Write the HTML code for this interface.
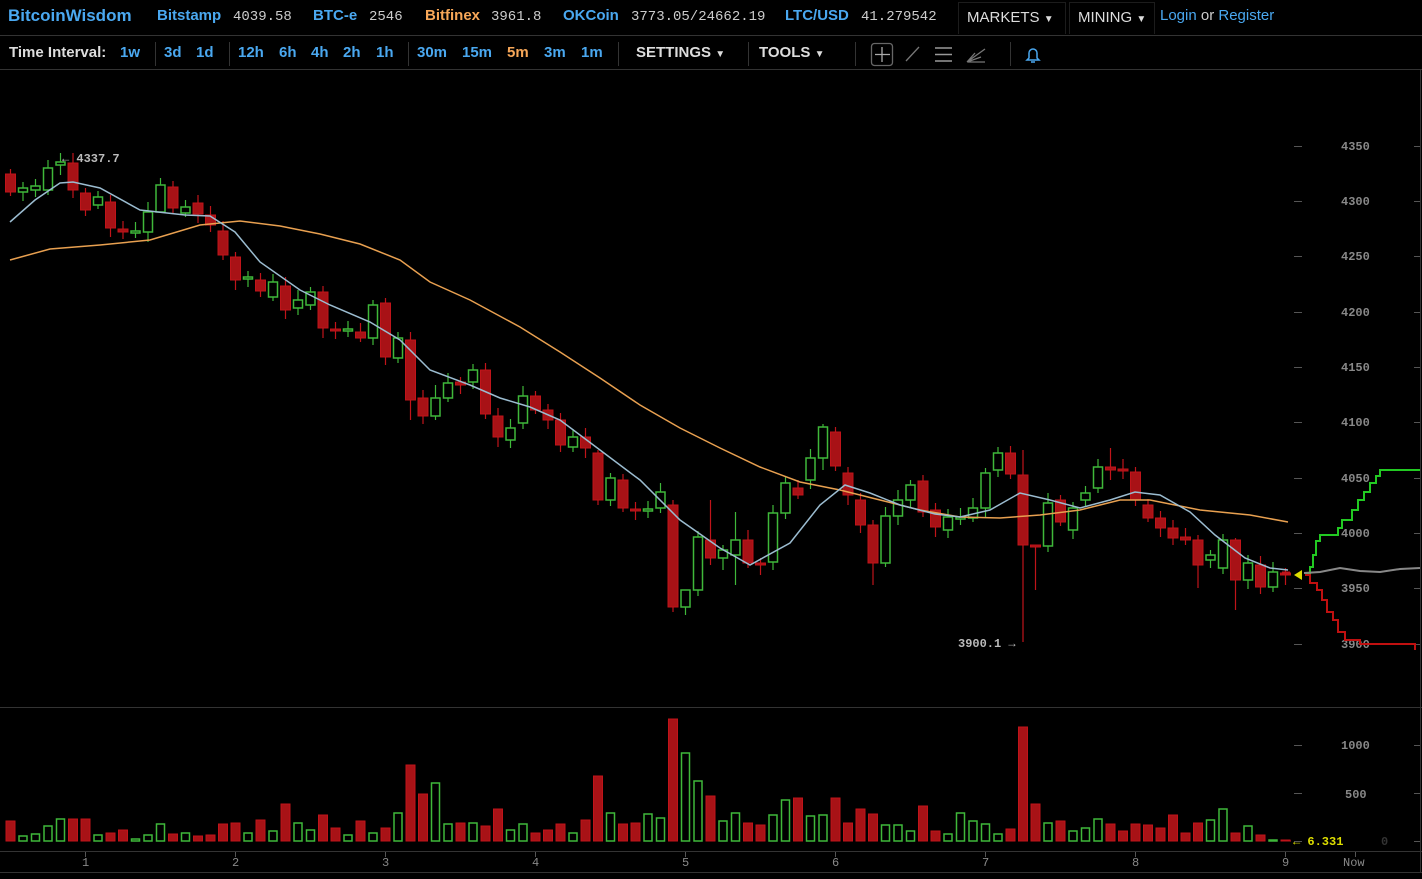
<!DOCTYPE html>
<html><head><meta charset="utf-8">
<style>
*{margin:0;padding:0;box-sizing:border-box}
body{width:1422px;height:879px;background:#000;overflow:hidden;font-family:"Liberation Sans",sans-serif;color:#ccc;position:relative}
.top{position:absolute;left:0;top:0;width:1422px;height:36px;border-bottom:1px solid #333;font-size:15px;white-space:nowrap}
.top span{position:absolute;top:7px}
.b{color:#4aa8f0;font-weight:bold}
.o{color:#f7a758;font-weight:bold}
.m{font-family:"Liberation Mono",monospace;font-size:14px;color:#ccc;top:9px!important}
.menu{position:absolute;top:2px;height:32px;border:1px solid #1c1c1c;border-bottom:none;color:#ddd;padding:6px 8px 0 8px}
.bar2{position:absolute;left:0;top:36px;width:1422px;height:34px;border-bottom:1px solid #333;font-size:15px;font-weight:bold;white-space:nowrap}
.bar2 span{position:absolute;top:8px}
.sep{position:absolute;top:6px;width:1px;height:24px;background:#333}
svg{position:absolute;left:0;top:0}
</style></head><body>
<div class="top">
<span class="b" style="left:8px;font-size:17px;top:6px">BitcoinWisdom</span>
<span class="b" style="left:157px">Bitstamp</span><span class="m" style="left:233px">4039.58</span>
<span class="b" style="left:313px">BTC-e</span><span class="m" style="left:369px">2546</span>
<span class="o" style="left:425px">Bitfinex</span><span class="m" style="left:491px">3961.8</span>
<span class="b" style="left:563px">OKCoin</span><span class="m" style="left:631px">3773.05/24662.19</span>
<span class="b" style="left:785px">LTC/USD</span><span class="m" style="left:861px">41.279542</span>
<div class="menu" style="left:958px;width:108px">MARKETS <span style="position:static;font-size:10px">▼</span></div>
<div class="menu" style="left:1069px;width:86px">MINING <span style="position:static;font-size:10px">▼</span></div>
<span style="left:1160px;color:#4aa8f0">Login <span style="position:static;color:#ccc">or</span> Register</span>
</div>
<div class="bar2">
<span style="left:9px;color:#ddd">Time Interval:</span>
<span class="b" style="left:120px">1w</span><div class="sep" style="left:155px"></div>
<span class="b" style="left:164px">3d</span><span class="b" style="left:196px">1d</span><div class="sep" style="left:229px"></div>
<span class="b" style="left:238px">12h</span><span class="b" style="left:279px">6h</span><span class="b" style="left:311px">4h</span><span class="b" style="left:343px">2h</span><span class="b" style="left:376px">1h</span><div class="sep" style="left:408px"></div>
<span class="b" style="left:417px">30m</span><span class="b" style="left:462px">15m</span><span class="o" style="left:507px">5m</span><span class="b" style="left:544px">3m</span><span class="b" style="left:581px">1m</span><div class="sep" style="left:618px"></div>
<span style="left:636px;color:#ddd">SETTINGS <span style="position:static;font-size:10px">▼</span></span><div class="sep" style="left:748px"></div>
<span style="left:759px;color:#ddd">TOOLS <span style="position:static;font-size:10px">▼</span></span><div class="sep" style="left:855px"></div>
<div class="sep" style="left:1010px"></div>
</div>
<svg width="1422" height="879" id="s">
<g stroke="#888" fill="none" stroke-width="1.3">
<rect x="871.5" y="43.5" width="21" height="22" rx="3" stroke="#666"/>
<path d="M882 47v15M875 54.5h15" stroke="#aaa"/>
<path d="M906 61l13-14" stroke="#777"/>
<path d="M935 48h17M935 54.5h17M935 61h17" stroke="#999" stroke-width="1.6"/>
<path d="M967 62l18-13M967 62l14-5M967 62l8-9M968 62h17" stroke="#777"/>
<path d="M1029 58v-5a4 4 0 0 1 8 0v5l2 2h-12zM1031 62h4" stroke="#4aa8f0" stroke-width="1.5"/>
</g>
<line x1="0" y1="707.5" x2="1422" y2="707.5" stroke="#333"/>
<line x1="0" y1="851.5" x2="1422" y2="851.5" stroke="#333"/>
<line x1="0" y1="872.5" x2="1422" y2="872.5" stroke="#333"/>
<line x1="1420.5" y1="70" x2="1420.5" y2="872" stroke="#333"/>
<g font-family="Liberation Mono,monospace" font-size="12" fill="#888" font-weight="bold">
<text x="1341" y="150">4350</text><text x="1341" y="205">4300</text><text x="1341" y="260">4250</text><text x="1341" y="316">4200</text><text x="1341" y="371">4150</text><text x="1341" y="426">4100</text><text x="1341" y="482">4050</text><text x="1341" y="537">4000</text><text x="1341" y="592">3950</text><text x="1341" y="648">3900</text>
<text x="1341" y="749">1000</text><text x="1345" y="798">500</text><text x="1381" y="845" fill="#333">0</text>
<text x="82" y="866" font-weight="normal">1</text><text x="232" y="866" font-weight="normal">2</text><text x="382" y="866" font-weight="normal">3</text><text x="532" y="866" font-weight="normal">4</text><text x="682" y="866" font-weight="normal">5</text><text x="832" y="866" font-weight="normal">6</text><text x="982" y="866" font-weight="normal">7</text><text x="1132" y="866" font-weight="normal">8</text><text x="1282" y="866" font-weight="normal">9</text><text x="1343" y="866" font-weight="normal">Now</text>
<text x="62" y="162" fill="#bbb">← 4337.7</text>
<text x="958" y="647" fill="#bbb">3900.1 →</text>
<text x="1293" y="845" fill="#dd0">← 6.331</text>
</g>
<g id="g"></g>
</svg>
<script>
var ns="http://www.w3.org/2000/svg",g=document.getElementById('g'),h='';
// ticks
[146,201,256,312,367,422,478,533,588,644,745,793,841].forEach(function(y){h+='<path d="M1294 '+y+'.5h8M1414 '+y+'.5h6" stroke="#555"/>';});
for(var d=0;d<9;d++){var x=85.5+150*d;h+='<path d="M'+x+' 852v5" stroke="#555"/>';}
h+='<path d="M1355.5 852v5" stroke="#555"/>';
var C=[[174,192],[192,188],[190,186],[190,168],[165,162],[163,190],[193,210],[205,197],[202,228],[229,232],[233,231],[232,212],[212,185],[187,208],[213,207],[203,214],[215,225],[231,255],[257,280],[279,277],[280,291],[297,282],[286,310],[308,300],[305,292],[292,328],[329,331],[331,329],[332,338],[338,305],[303,357],[358,338],[340,400],[398,416],[416,398],[398,383],[382,385],[382,370],[370,414],[416,437],[440,428],[423,396],[396,410],[410,420],[420,445],[447,437],[437,448],[453,500],[500,478],[480,508],[509,511],[511,509],[508,492],[505,607],[607,590],[590,537],[540,558],[558,550],[555,540],[540,563],[563,565],[562,513],[513,483],[488,495],[480,458],[458,427],[432,466],[473,495],[500,525],[525,563],[563,516],[516,500],[500,485],[481,512],[510,527],[530,517],[519,517],[518,508],[508,473],[470,453],[453,474],[475,545],[545,547],[546,503],[500,522],[530,508],[500,493],[488,467],[467,470],[469,471],[472,500],[505,518],[518,528],[528,538],[537,540],[540,565],[560,555],[568,540],[540,580],[580,563],[565,587],[587,572],[573,575]];
var W={53:[500,612],54:[590,615],81:[450,642],82:[545,590],12:[178,212],30:[298,365],29:[300,345],32:[332,420],47:[450,505],69:[520,585],34:[385,420],98:[538,610],95:[535,588],61:[505,570],65:[424,470],88:[448,480],58:[512,585],57:[545,570],56:[500,565]};
var V=[20,5,7,15,22,22,22,6,8,11,2,6,17,7,8,5,6,17,18,8,21,10,37,18,11,26,13,6,20,8,13,28,76,47,58,17,18,18,15,32,11,17,8,11,17,8,21,65,28,17,18,27,23,122,88,60,45,20,28,18,16,26,41,43,25,26,43,18,32,27,16,16,10,35,10,7,28,20,17,7,12,114,37,18,20,10,13,22,17,10,17,16,13,26,8,18,21,32,8,15,6,1,1];
for(var i=0;i<C.length;i++){
 var o=C[i][0],c=C[i][1],x=10.5+12.5*i,up=c<o,t=Math.min(o,c),b=Math.max(o,c);
 var w=W[i]||[t-5-(i*7%6),b+4+(i*5%7)];
 var col=up?'#3fb83a':'#c0141a';
 h+='<line x1="'+x+'" y1="'+w[0]+'" x2="'+x+'" y2="'+w[1]+'" stroke="'+col+'" stroke-width="1.2"/>';
 var bh=Math.max(b-t,2);
 if(up)h+='<rect x="'+(x-4.5)+'" y="'+t+'" width="9" height="'+bh+'" fill="#000" stroke="'+col+'" stroke-width="1.5"/>';
 else h+='<rect x="'+(x-5)+'" y="'+t+'" width="10" height="'+bh+'" fill="#a81216" stroke="#c0141a"/>';
 var v=V[i]||1;
 if(up)h+='<rect x="'+(x-4)+'" y="'+(841-v)+'" width="8" height="'+v+'" fill="none" stroke="'+col+'" stroke-width="1.5"/>';
 else h+='<rect x="'+(x-4.5)+'" y="'+(841-v)+'" width="9" height="'+v+'" fill="#a81216" stroke="#c0141a"/>';
}
function pl(p,col,sw){return '<polyline fill="none" stroke="'+col+'" stroke-width="'+sw+'" points="'+p+'"/>';}
h+=pl("10,260 50,249 100,245 150,240 200,225 240,221 280,226 320,234 360,244 400,260 430,282 470,300 520,327 560,352 600,378 640,405 680,428 720,448 760,467 800,482 840,490 880,500 920,510 960,517 1000,518 1040,515 1080,510 1120,500 1150,500 1200,510 1250,515 1288,522","#e8a050",1.5);
h+=pl("10,222 35,200 60,183 73,182 100,188 140,210 185,215 210,216 235,232 260,262 300,290 330,305 370,322 400,340 430,370 470,385 500,398 530,407 560,420 600,450 640,480 680,520 720,548 750,565 790,543 820,505 845,485 870,493 900,505 935,514 960,517 990,510 1020,493 1050,500 1080,508 1110,500 1135,492 1160,495 1190,512 1215,535 1245,558 1270,568 1288,570","#9bbcd0",1.5);
h+=pl("1305,574 1310,574 1310,567 1313,567 1313,555 1316,555 1316,541 1320,541 1320,535 1338,535 1338,528 1342,528 1342,520 1352,520 1352,510 1358,510 1358,500 1364,500 1364,492 1370,492 1370,483 1376,483 1376,476 1380,476 1380,470 1420,470","#22c922",2);
h+=pl("1304,573 1320,572 1340,568 1360,571 1380,572 1400,569 1420,568","#888",2);
h+=pl("1305,575 1310,575 1310,583 1317,583 1317,590 1322,590 1322,600 1327,600 1327,612 1333,612 1333,620 1338,620 1338,632 1345,632 1345,640 1360,640 1360,644 1415,644 1415,650","#c01010",2);
h+='<path d="M1282 573h8" stroke="#c0141a" stroke-width="3"/><path d="M1294 575l8-5v10z" fill="#dd0"/>';
h+='<path d="M1285 841h6" stroke="#c0141a"/>';
g.innerHTML=h;
</script>
</body></html>
